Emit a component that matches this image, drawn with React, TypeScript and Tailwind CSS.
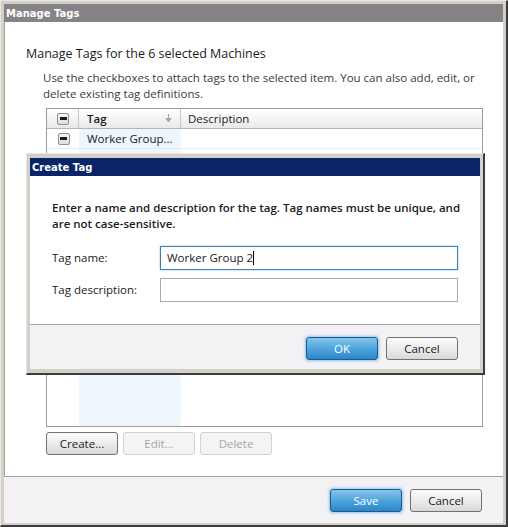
import React from 'react';

const UI_FONT = { fontFamily: '"Open Sans", "Noto Sans", sans-serif' };
const TITLE_FONT = { fontFamily: '"DejaVu Sans", Verdana, sans-serif' };

type ButtonKind = 'normal' | 'primary' | 'disabled';

function WinButton({ label, kind = 'normal' }: { label: string; kind?: ButtonKind }) {
  const styles: Record<ButtonKind, string> = {
    normal: 'border-[#707070] bg-linear-to-b from-[#fbfbfb] via-[#ececec] to-[#d9d9d9] text-[#1b1b1b]',
    primary:
      'border-[#1d5a88] bg-linear-to-b from-[#86c6ee] via-[#4ea5dd] to-[#2b87c9] text-white shadow-[0_0_3px_1px_#8cc4ec]',
    disabled: 'border-[#d2d2d2] bg-[#f4f4f4] text-[#a6a6a6]',
  };
  return (
    <div
      className={`w-[72px] h-[23px] rounded-[3px] border flex items-center justify-center text-[11.5px] leading-none ${styles[kind]}`}
    >
      {label}
    </div>
  );
}

function MinusBox() {
  return (
    <div className="w-[12px] h-[12px] rounded-[2px] border border-[#8f8f8f] bg-linear-to-b from-[#f4f4f4] to-[#dedede] flex items-center justify-center">
      <div className="w-[7px] h-[3px] bg-[#1a1a1a]" />
    </div>
  );
}

function SortArrow() {
  return (
    <svg width="7" height="9" viewBox="0 0 7 9" className="block">
      <rect x="3" y="0" width="1" height="5" fill="#a8a8a8" />
      <path d="M0 4 L7 4 L3.5 8.5 Z" fill="#a8a8a8" />
    </svg>
  );
}

function TagTable() {
  return (
    <div className="ml-[41px] mt-[6px] w-[437px] h-[319px] border border-[#9c9c9c] flex flex-col">
      {/* header */}
      <div className="h-[20px] flex border-b border-[#b5b5b5] bg-linear-to-b from-white to-[#e9e9ec] text-[11.5px]">
        <div className="w-[32px] flex items-center justify-center border-r border-[#c9c9c9] pl-[1px]">
          <MinusBox />
        </div>
        <div className="w-[102px] flex items-center justify-between border-r border-[#c9c9c9] pl-[8px] pr-[8px] font-semibold text-[#1b1b1b]">
          <span>Tag</span>
          <SortArrow />
        </div>
        <div className="flex-1 flex items-center pl-[7px] text-[#1b1b1b]">Description</div>
      </div>
      {/* rows */}
      <div className="flex-1 flex text-[11.5px]">
        <div className="w-[32px]">
          <div className="h-[20px] flex items-center justify-center border-b border-[#ececec] pl-[1px]">
            <MinusBox />
          </div>
        </div>
        <div className="w-[102px] bg-[#edf5fd]">
          <div className="h-[20px] flex items-center pl-[8px] border-b border-[#e3e9f0] text-[#1b1b1b]">
            Worker Group...
          </div>
        </div>
        <div className="flex-1">
          <div className="h-[20px] border-b border-[#ececec]" />
        </div>
      </div>
    </div>
  );
}

function CreateTagDialog() {
  return (
    <div className="absolute left-[25px] top-[152px] w-[459px] h-[222px] bg-[#d4d0c8] border-l border-t border-[#ebe9e4] border-r-2 border-b-2 border-r-[#3c3c3c] border-b-[#3c3c3c] pl-[3px] pt-[4px] pr-[3px] pb-[4px] flex flex-col">
      <div className="h-[18px] bg-[#0a246a] text-white font-bold text-[10px] flex items-center pl-[2px]" style={TITLE_FONT}>
        Create Tag
      </div>
      <div className="h-[148px] bg-white pl-[22px] pt-[24px] text-[11.5px] text-[#1b1b1b]">
        <p className="font-semibold leading-[16px]">
          Enter a name and description for the tag. Tag names must be unique, and
          <br />
          are not case-sensitive.
        </p>
        <div className="mt-[14px] flex items-center">
          <span className="w-[108px]">Tag name:</span>
          <div className="w-[298px] h-[24px] border border-[#3c7fb1] shadow-[0_0_2px_#8fc2ee] flex items-center pl-[6px]">
            <span>Worker Group 2</span>
            <span className="w-[1px] h-[14px] bg-black" />
          </div>
        </div>
        <div className="mt-[8px] flex items-center">
          <span className="w-[108px]">Tag description:</span>
          <div className="w-[298px] h-[24px] border border-[#a9a9a9]" />
        </div>
      </div>
      <div className="h-[45px] border-t border-[#a3a3a7] bg-[#f3f1f4] flex justify-end gap-[8px] pt-[12px] pr-[22px]">
        <WinButton label="OK" kind="primary" />
        <WinButton label="Cancel" />
      </div>
    </div>
  );
}

export default function App() {
  return (
    <div
      className="relative w-[508px] h-[527px] bg-[#d4d0c8] border-l border-t border-[#ebe9e4] border-r-2 border-b-2 border-r-[#3c3c3c] border-b-[#3c3c3c] pl-[3px] pt-[3px] pr-[3px] pb-[2px] flex flex-col"
      style={UI_FONT}
    >
      <div className="h-[18px] bg-[#858385] text-white font-bold text-[10px] flex items-center pl-[2px]" style={TITLE_FONT}>
        Manage Tags
      </div>

      <div className="h-[454px] bg-white border-l border-[#a0a0a0] flex flex-col">
        <h1 className="pl-[21px] pt-[23px] text-[12.5px] leading-[18px] text-[#1b1b1b]">
          Manage Tags for the 6 selected Machines
        </h1>
        <p className="pl-[38px] mt-[7px] text-[11.5px] leading-[16px] text-[#3a3a3a]">
          Use the checkboxes to attach tags to the selected item. You can also add, edit, or
          <br />
          delete existing tag definitions.
        </p>
        <TagTable />
        <div className="ml-[41px] mt-[5px] flex gap-[5px]">
          <WinButton label="Create..." />
          <WinButton label="Edit..." kind="disabled" />
          <WinButton label="Delete" kind="disabled" />
        </div>
      </div>

      <div className="h-[47px] border-t border-[#a3a3a7] bg-[#f3f1f4] flex justify-end gap-[8px] pt-[12px] pr-[21px]">
        <WinButton label="Save" kind="primary" />
        <WinButton label="Cancel" />
      </div>

      <CreateTagDialog />
    </div>
  );
}
